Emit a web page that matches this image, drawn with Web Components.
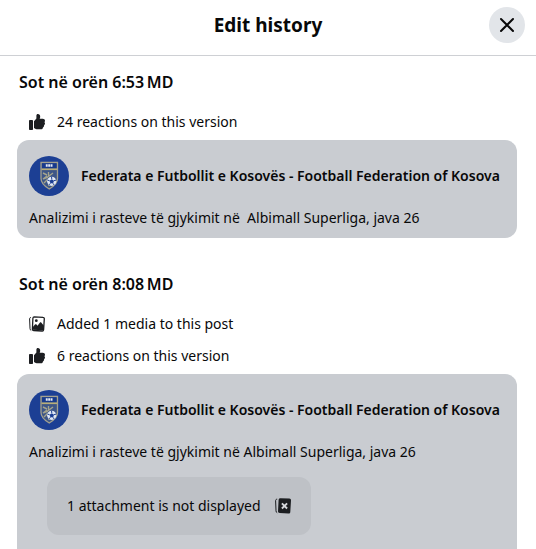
<!DOCTYPE html>
<html lang="en">
<head>
<meta charset="utf-8">
<meta name="viewport" content="width=device-width, initial-scale=1">
<title>Edit history</title>
<style>
  body {
    margin: 0;
    background: #fff;
    color: #080809;
    font: 14px/20px "Noto Sans", "Open Sans", sans-serif;
  }
</style>
</head>
<body>

<history-dialog>
  <span slot="title">Edit history</span>

  <history-version>
    <span slot="time">Sot në orën 6:53&#8239;MD</span>
    <history-note icon="like">24 reactions on this version</history-note>
    <post-card slot="post" author="Federata e Futbollit e Kosovës - Football Federation of Kosova">Analizimi i rasteve të gjykimit në&nbsp; Albimall Superliga, java 26</post-card>
  </history-version>

  <history-version>
    <span slot="time">Sot në orën 8:08&#8239;MD</span>
    <history-note icon="media">Added 1 media to this post</history-note>
    <history-note icon="like">6 reactions on this version</history-note>
    <post-card slot="post" author="Federata e Futbollit e Kosovës - Football Federation of Kosova">
      Analizimi i rasteve të gjykimit në Albimall Superliga, java 26
      <post-attachment slot="attachment">1 attachment is not displayed</post-attachment>
    </post-card>
  </history-version>
</history-dialog>

<script>
const icons = {
  like: `
    <svg viewBox="0 0 16 16" width="16" height="16" fill="#1c1e21" aria-hidden="true">
      <rect x="0" y="6" width="4" height="10" rx=".8"/>
      <path d="M5 7.2 7.400 4.600V1.600C7.400.6 8 0 8.900 0c1.400 0 2.300 1 2.300 2.500 0 .9-.2 1.600-.5 2.300h3c1.400 0 2.300.8 2.300 2 0 .6-.2 1-.6 1.400.4.4.6.8.6 1.300 0 .8-.4 1.400-1 1.700.1.300.2.600.1.900-.1.600-.5 1.100-1.100 1.300-.2 1.300-1 1.900-2 1.900H8.700c-1.500 0-2.600-.5-3.700-1.300z"/>
    </svg>`,
  media: `
    <svg viewBox="0 0 16 16" width="16" height="16" fill="none" stroke="#1c1e21" aria-hidden="true">
      <path d="M2 1.500C1 1.500.6 2 .6 3L1 12.500c0 1 .4 1.700 1.200 2" stroke-width="1"/>
      <path d="M5.200.9 14 1.400c.9 0 1.400.6 1.300 1.500l-.7 10.800c-.1.900-.6 1.400-1.500 1.300l-8.400-.5c-.9 0-1.400-.6-1.300-1.500l.5-10.800C4 1.300 4.400.9 5.200.9z" stroke-width="1.300"/>
      <circle cx="7.300" cy="4.700" r="1.400" fill="#1c1e21" stroke="none"/>
      <path d="M3.600 11.200 6 8.600c.5-.5 1-.5 1.500 0l1 1.100 2.300-3c.5-.6 1.100-.6 1.600 0l2.500 3-.4 4.600-11-.6z" fill="#1c1e21" stroke="none"/>
    </svg>`,
  hidden: `
    <svg viewBox="0 0 16 16" width="16" height="16" fill="none" aria-hidden="true">
      <path d="M2.200 1.200C1 1.200.6 1.800.6 2.800L1 12.800c0 1 .4 1.700 1.200 2" stroke="#1c1e21"/>
      <path d="M5.400.2 14.300.6c1.100.1 1.700.8 1.700 1.800l-.7 11.500c-.1 1.100-.8 1.800-1.900 1.700l-8.600-.5C3.600 15 3 14.300 3 13.300l.6-11.400C3.700.800 4.400.2 5.400.2z" fill="#1c1e21"/>
      <path d="m6.900 5.300 5.200 5.200m0-5.200-5.200 5.200" stroke="#d5d7db" stroke-width="1.900"/>
    </svg>`,
  close: `
    <svg viewBox="0 0 16 16" width="16" height="16" fill="none" stroke="#080809" stroke-width="2" stroke-linecap="round" aria-hidden="true">
      <path d="m2 2 12 12M14 2 2 14"/>
    </svg>`,
  crest: `
    <svg viewBox="0 0 40 40" width="40" height="40" fill="none" role="img" aria-label="Federation crest">
      <circle cx="20" cy="20" r="20" fill="#1c3f94"/>
      <path d="M12 6.500h16.500v16c0 4.500-3.200 7.500-8.250 10.500C15.200 30 12 27 12 22.500z" fill="#3d5687" stroke="#a3a18f" stroke-width="1.300"/>
      <path d="M13 7.200h14.500V12H13z" fill="#173a8c"/>
      <path d="M16.800 9.500h7" stroke="#e4eaf5" stroke-width="2.400" stroke-dasharray="1.900 .5"/>
      <path d="M12.500 13.300h15.500" stroke="#b8ae79" stroke-width="1.600"/>
      <path d="m14 17 4 2m1.500-3v5m4.500-4-4 3m-6 3 5-2m-4 6 4-4m1 7v-6m-6-1 4-3" stroke="#a4a48d" stroke-width="1.400"/>
      <circle cx="22.700" cy="25.300" r="4.600" fill="#dfe7f4"/>
      <path d="m22.800 23.200 2.200 1.600-.9 2.500h-2.700l-.8-2.500z" fill="#1c3f94"/>
      <path d="m22.800 23-.3-2.300m2.500 4 2-.6m-3 3.200 1.200 1.800m-3.800-1.800-1.400 1.600m.6-4.100-2.200-.8" stroke="#1c3f94"/>
    </svg>`
};

class HistoryDialog extends HTMLElement {
  constructor() {
    super();
    this.attachShadow({ mode: "open" }).innerHTML = `
      <style>
        :host {
          display: flex;
          flex-direction: column;
          height: 100vh;
        }
        header {
          display: grid;
          grid-template-columns: 36px 1fr 36px;
          align-items: center;
          padding: 7px 11px 12px;
          border-bottom: 1px solid #ced0d4;
        }
        h1 {
          grid-column: 2;
          margin: 0;
          font-size: 19px;
          line-height: 24px;
          font-weight: 700;
          text-align: center;
        }
        button {
          display: grid;
          place-items: center;
          width: 36px;
          height: 36px;
          padding: 0;
          border: 0;
          border-radius: 50%;
          background: #e2e5e9;
          cursor: pointer;
        }
        main {
          display: flex;
          flex-direction: column;
          flex: 1;
          gap: 34px;
          min-height: 0;
          padding: 14px 19px 0 17px;
          overflow-y: auto;
          scrollbar-width: none;
        }
      </style>
      <header>
        <h1><slot name="title"></slot></h1>
        <button type="button" aria-label="Close">${icons.close}</button>
      </header>
      <main><slot></slot></main>
    `;
  }
}

class HistoryVersion extends HTMLElement {
  constructor() {
    super();
    this.attachShadow({ mode: "open" }).innerHTML = `
      <style>
        :host { display: block; }
        h2 {
          margin: 0 2px 12px;
          font-size: 16px;
          line-height: 24px;
          font-weight: 600;
        }
        .post { margin-top: 2px; }
      </style>
      <h2><slot name="time"></slot></h2>
      <slot></slot>
      <div class="post"><slot name="post"></slot></div>
    `;
  }
}

class HistoryNote extends HTMLElement {
  constructor() {
    super();
    this.attachShadow({ mode: "open" });
  }

  connectedCallback() {
    this.shadowRoot.innerHTML = `
      <style>
        :host {
          display: flex;
          align-items: center;
          gap: 12px;
          height: 32px;
          padding: 0 12px;
        }
        svg { flex: none; }
      </style>
      ${icons[this.getAttribute("icon")]}
      <span><slot></slot></span>
    `;
  }
}

class PostCard extends HTMLElement {
  constructor() {
    super();
    this.attachShadow({ mode: "open" });
  }

  connectedCallback() {
    this.shadowRoot.innerHTML = `
      <style>
        :host {
          display: block;
          padding: 16px 12px 10px;
          border-radius: 12px;
          background: #c9ccd1;
        }
        .author {
          display: flex;
          align-items: center;
          gap: 12px;
        }
        .author svg { flex: none; }
        h3 {
          margin: 0;
          font-size: 14px;
          line-height: 20px;
          font-weight: 600;
        }
        p { margin: 12px 0 0; }
      </style>
      <div class="author">
        ${icons.crest}
        <h3>${this.getAttribute("author")}</h3>
      </div>
      <p><slot></slot></p>
      <slot name="attachment"></slot>
    `;
  }
}

class PostAttachment extends HTMLElement {
  constructor() {
    super();
    this.attachShadow({ mode: "open" }).innerHTML = `
      <style>
        :host {
          display: flex;
          align-items: center;
          gap: 14px;
          box-sizing: border-box;
          width: fit-content;
          margin: 15px 18px 16px;
          padding: 19px 20px;
          border-radius: 12px;
          background: #bec1c6;
        }
        svg { flex: none; }
      </style>
      <span><slot></slot></span>
      ${icons.hidden}
    `;
  }
}

customElements.define("history-dialog", HistoryDialog);
customElements.define("history-version", HistoryVersion);
customElements.define("history-note", HistoryNote);
customElements.define("post-card", PostCard);
customElements.define("post-attachment", PostAttachment);
</script>
</body>
</html>
